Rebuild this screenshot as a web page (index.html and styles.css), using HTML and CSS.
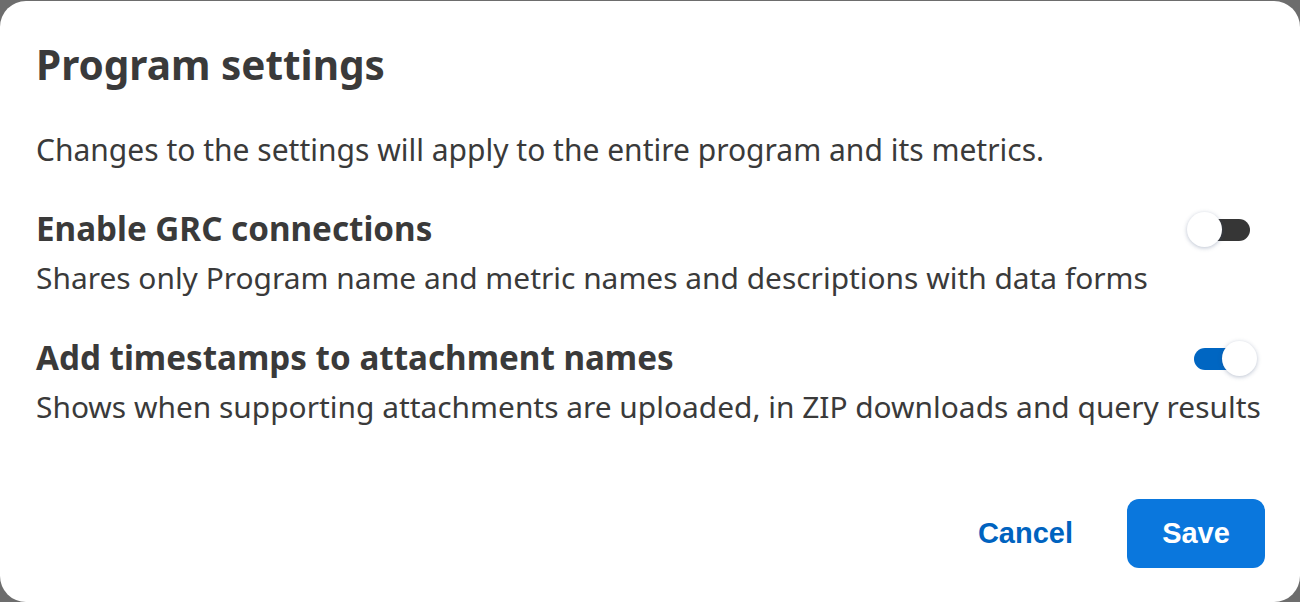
FILE: index.html
```html
<!DOCTYPE html>
<html lang="en">
<head>
<meta charset="utf-8">
<title>Program settings</title>
<link rel="stylesheet" href="styles.css">
</head>
<body>
<div class="dialog">
  <h1 class="title">Program settings</h1>
  <p class="intro">Changes to the settings will apply to the entire program and its metrics.</p>
  <div class="setting">
    <div class="label">Enable GRC connections</div>
    <div class="toggle off"><span class="track"></span><span class="knob"></span></div>
    <div class="desc">Shares only Program name and metric names and descriptions with data forms</div>
  </div>
  <div class="setting">
    <div class="label">Add timestamps to attachment names</div>
    <div class="toggle on"><span class="track"></span><span class="knob"></span></div>
    <div class="desc">Shows when supporting attachments are uploaded, in ZIP downloads and query results</div>
  </div>
  <div class="footer">
    <button class="btn btn-cancel">Cancel</button>
    <button class="btn btn-save">Save</button>
  </div>
</div>
</body>
</html>
```
FILE: styles.css
```css
html, body {
  margin: 0;
  padding: 0;
}
body {
  background: #6d6d6d;
  width: 1300px;
  height: 602px;
  overflow: hidden;
  font-family: "Noto Sans", "Liberation Sans", sans-serif;
  color: #3a3a3a;
}
.dialog {
  margin-top: 1px;
  height: 601px;
  box-sizing: border-box;
  background: #fff;
  border-radius: 26px;
  padding: 36px 30px 0 36px;
  display: flex;
  flex-direction: column;
}
.title {
  margin: 0;
  font-size: 40.5px;
  line-height: 56px;
  font-weight: 700;
}
.intro {
  margin: 39px 0 0 0;
  font-size: 30px;
  line-height: 36px;
}
.setting {
  display: grid;
  grid-template-columns: 1fr auto;
  align-items: start;
}
.setting:nth-of-type(1) {
  margin-top: 39px;
}
.setting + .setting {
  margin-top: 37px;
}
.label {
  font-size: 33.2px;
  line-height: 44px;
  font-weight: 700;
}
.desc {
  grid-column: 1 / -1;
  font-size: 29.9px;
  line-height: 42px;
  margin-top: 6px;
  white-space: nowrap;
}
.toggle {
  position: relative;
  width: 70px;
  height: 36px;
  margin-top: 5px;
  margin-right: 13px;
}
.toggle .track {
  position: absolute;
  left: 7px;
  right: 7px;
  top: 7px;
  height: 22px;
  border-radius: 11px;
  background: #363636;
}
.toggle.on .track {
  background: #0066c2;
}
.toggle .knob {
  position: absolute;
  top: 0;
  left: 0;
  width: 35px;
  height: 35px;
  border-radius: 50%;
  background: #fff;
  box-shadow: 0 1px 4px rgba(60, 80, 120, 0.35);
}
.toggle.on .knob {
  left: 35px;
}
.footer {
  margin-top: auto;
  margin-bottom: 34px;
  margin-right: 6px;
  display: flex;
  justify-content: flex-end;
  align-items: center;
  gap: 30px;
}
.btn {
  font-family: "Liberation Sans", Arial, sans-serif;
  font-weight: 700;
  font-size: 29px;
  border: none;
  border-radius: 12px;
  height: 69px;
  cursor: pointer;
}
.btn-cancel {
  background: transparent;
  color: #0063bf;
  padding: 0 24px;
}
.btn-save {
  background: #0a77dd;
  color: #fff;
  width: 138px;
  margin-right: -1px;
}
```
